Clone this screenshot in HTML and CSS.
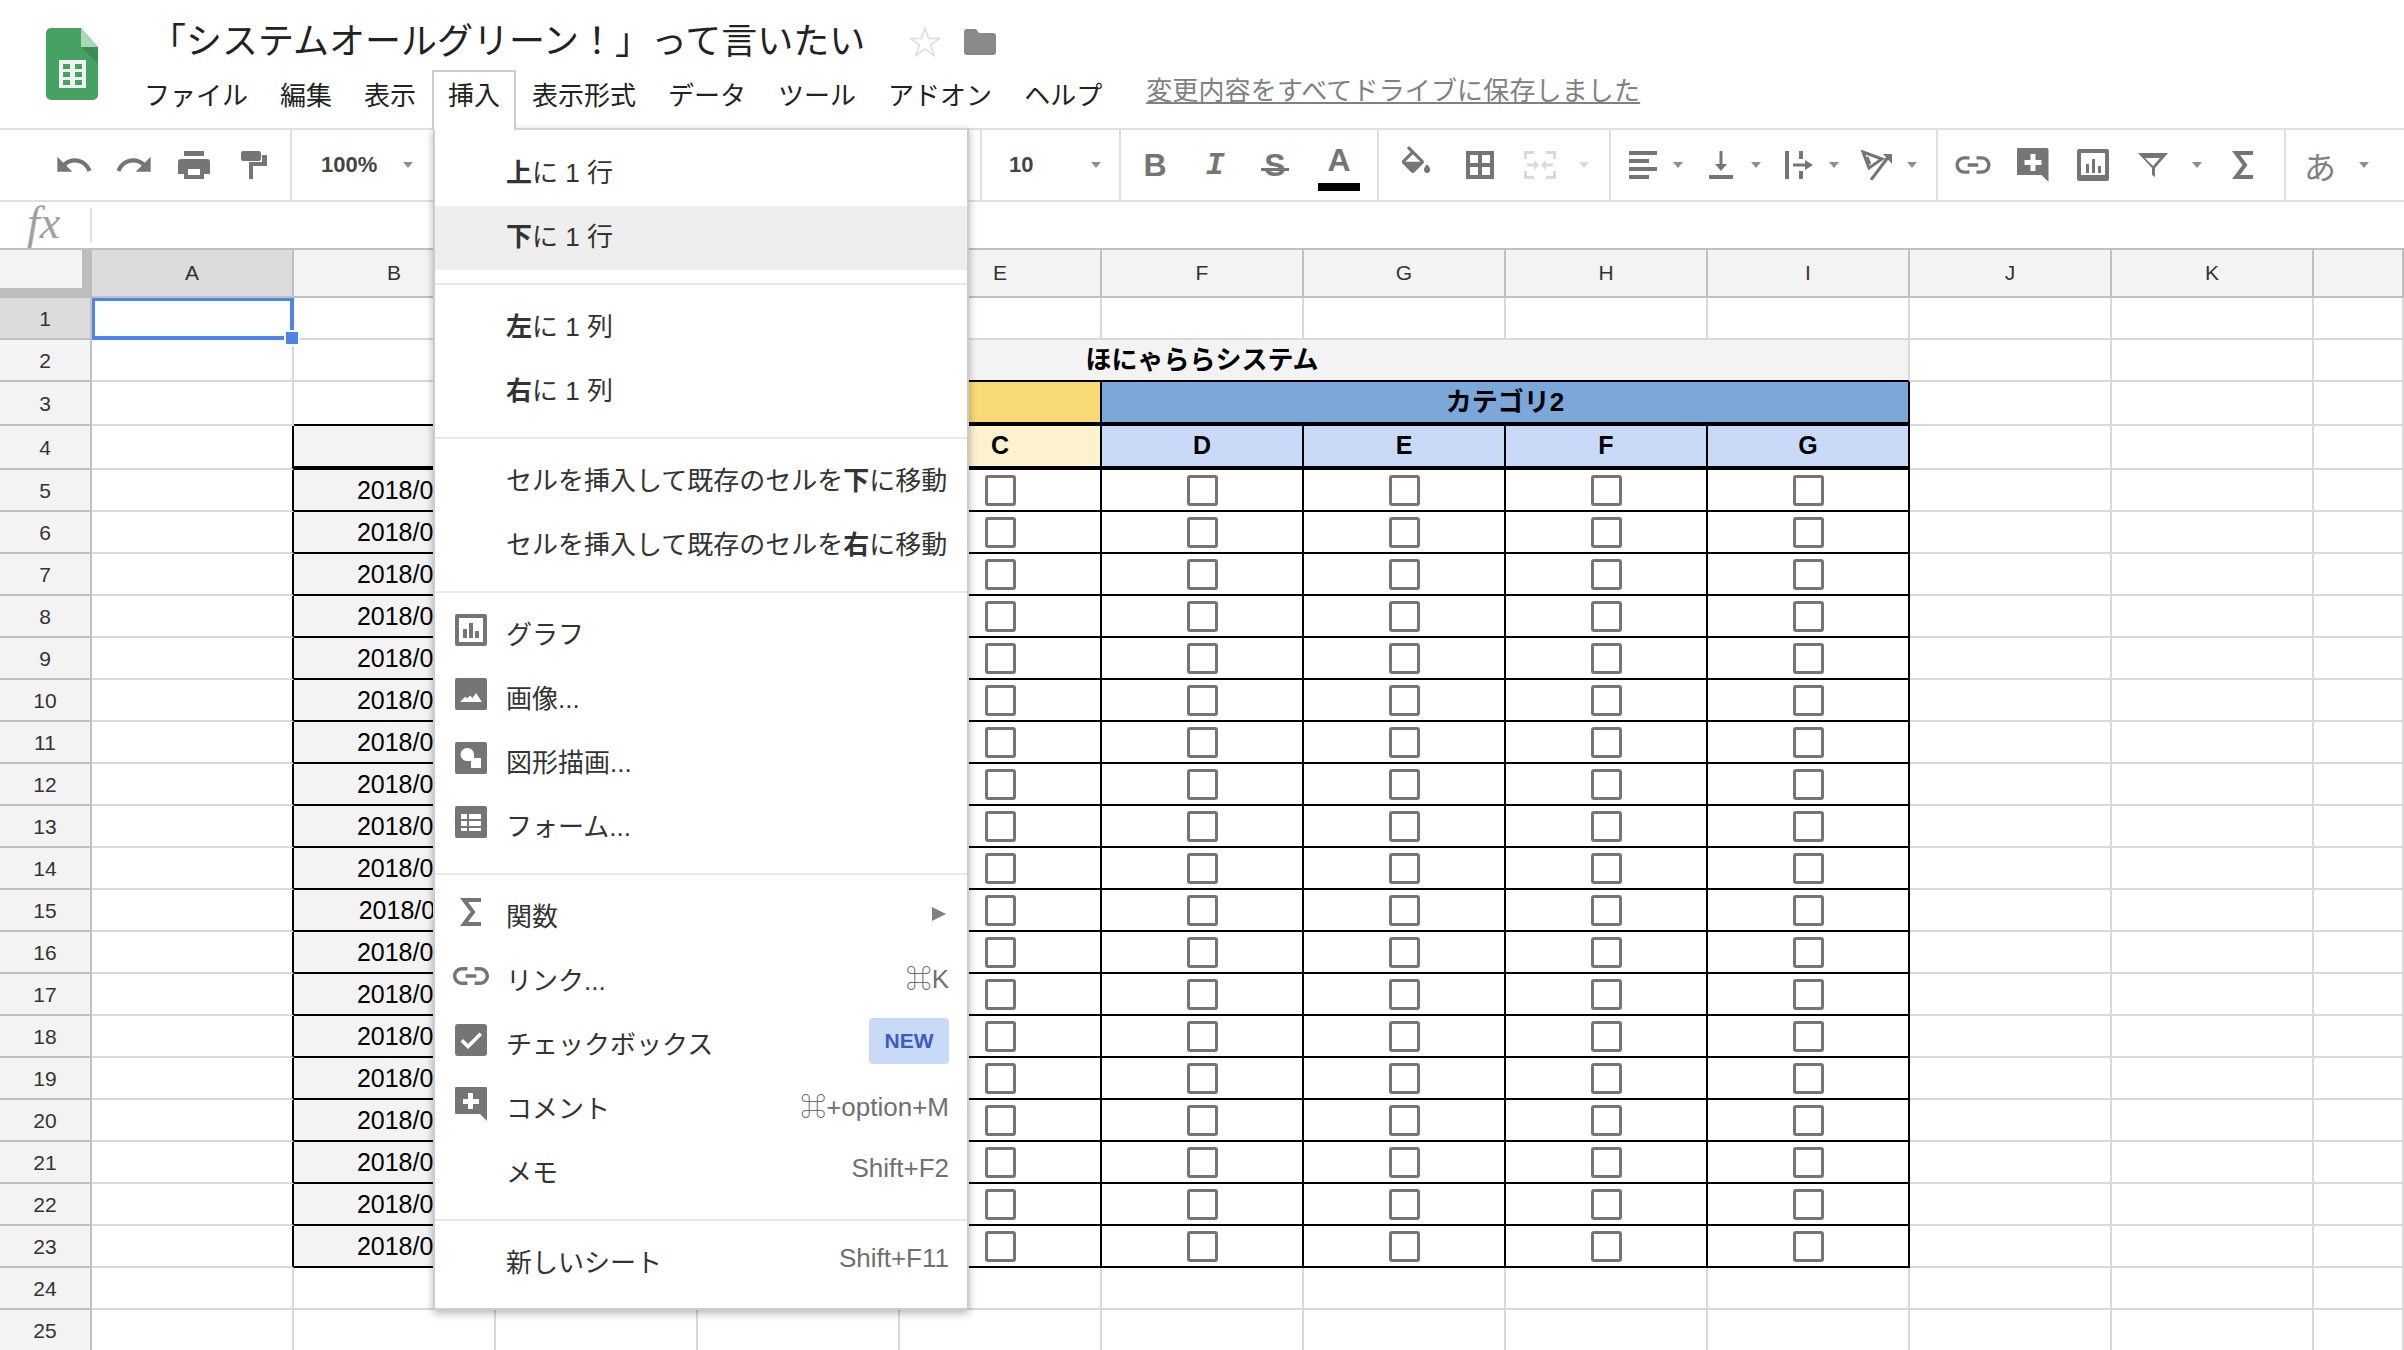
FILE: index.html
```html
<!DOCTYPE html>
<html lang="ja">
<head>
  <meta charset="UTF-8" />
  <title>「システムオールグリーン！」って言いたい - Google スプレッドシート</title>
  <link rel="stylesheet" href="styles.css">
</head>
<body>
<div class="app">

  <header class="doc-header">
    <svg class="logo" width="52" height="72" viewBox="0 0 52 72">
      <path d="M5 0h30l17 19v48a5 5 0 0 1-5 5H5a5 5 0 0 1-5-5V5a5 5 0 0 1 5-5z" fill="#46a263"/>
      <path d="M35 19l17 17V19z" fill="#3a8d55"/>
      <path d="M35 0l17 19H35z" fill="#a9d8b6"/>
      <path d="M13 32h27v28H13z" fill="#f1f1f1"/>
      <path d="M17 36h7v5h-7zM29 36h7v5h-7zM17 44h7v5h-7zM29 44h7v5h-7zM17 52h7v5h-7zM29 52h7v5h-7z" fill="#46a263"/>
    </svg>
    <div class="doc-main">
      <div class="title-row">
        <span class="doc-title">「システムオールグリーン！」って言いたい</span>
        <svg class="star" width="32" height="32" viewBox="0 0 32 32">
          <path d="M16 2l3.6 10.4h11l-8.9 6.5 3.4 10.6L16 23l-9.1 6.5 3.4-10.6-8.9-6.5h11z" fill="#fff" stroke="#dcdcdc" stroke-width="1.5"/>
        </svg>
        <svg class="folder" width="32" height="26" viewBox="0 0 32 26">
          <path d="M3 0h9l3 4h14a3 3 0 0 1 3 3v16a3 3 0 0 1-3 3H3a3 3 0 0 1-3-3V3a3 3 0 0 1 3-3z" fill="#8a8a8a"/>
        </svg>
      </div>
      <nav class="menu-bar">
        <span class="menu-item">ファイル</span>
        <span class="menu-item">編集</span>
        <span class="menu-item">表示</span>
        <span class="menu-item active">挿入</span>
        <span class="menu-item">表示形式</span>
        <span class="menu-item">データ</span>
        <span class="menu-item">ツール</span>
        <span class="menu-item">アドオン</span>
        <span class="menu-item">ヘルプ</span>
        <span class="save-status">変更内容をすべてドライブに保存しました</span>
      </nav>
    </div>
  </header>

  <section class="toolbar">
    <div class="tool-group group-history">
      <span class="tool"><svg width="40" height="40" viewBox="0 0 24 24"><path d="M12.5 8c-2.65 0-5.05.99-6.9 2.6L2 7v9h9l-3.62-3.62c1.39-1.16 3.16-1.88 5.12-1.88 3.54 0 6.55 2.31 7.6 5.5l2.37-.78C21.08 11.03 17.15 8 12.5 8z"/></svg></span>
      <span class="tool"><svg width="40" height="40" viewBox="0 0 24 24"><path d="M18.4 10.6C16.55 8.99 14.15 8 11.5 8c-4.65 0-8.58 3.03-9.96 7.22L3.9 16c1.05-3.19 4.05-5.5 7.6-5.5 1.95 0 3.73.72 5.12 1.88L13 16h9V7l-3.6 3.6z"/></svg></span>
      <span class="tool"><svg width="32" height="28" viewBox="0 0 32 28"><path fill-rule="evenodd" d="M6 0h20v5H6zM3 8h26a3 3 0 0 1 3 3v12h-6v5H6v-5H0V11a3 3 0 0 1 3-3zM10 18v6h12v-6z"/></svg></span>
      <span class="tool"><svg width="26" height="28" viewBox="0 0 26 28"><path d="M2 0h16a2 2 0 0 1 2 2v6a2 2 0 0 1-2 2H2a2 2 0 0 1-2-2V2a2 2 0 0 1 2-2zM21 4h5v11H12v13H8V11h13z"/></svg></span>
    </div>
    <div class="tool-group group-zoom">
      <span class="tool-value">100%</span>
      <i class="caret"></i>
    </div>
    <div class="tool-group group-font"></div>
    <div class="tool-group group-size">
      <span class="tool-value">10</span>
      <i class="caret"></i>
    </div>
    <div class="tool-group group-text">
      <span class="tool glyph glyph-b">B</span>
      <span class="tool glyph glyph-i">I</span>
      <span class="tool glyph glyph-s">S</span>
      <span class="tool glyph glyph-a">A</span>
    </div>
    <div class="tool-group group-cell">
      <span class="tool"><svg width="38" height="38" viewBox="0 0 24 24"><path d="M16.56 8.94L7.62 0 6.21 1.41l2.38 2.38-5.15 5.15c-.59.59-.59 1.54 0 2.12l5.5 5.5c.29.29.68.44 1.06.44s.77-.15 1.06-.44l5.5-5.5c.59-.58.59-1.53 0-2.12zM5.21 10L10 5.21 14.79 10H5.21zM19 11.5s-2 2.17-2 3.5c0 1.1.9 2 2 2s2-.9 2-2c0-1.33-2-3.5-2-3.5z"/></svg></span>
      <span class="tool tool-gap"><svg width="28" height="28" viewBox="0 0 28 28"><path fill-rule="evenodd" d="M0 0h28v28H0zM4 4v8h8V4zM16 4v8h8V4zM4 16v8h8v-8zM16 16v8h8v-8z"/></svg></span>
      <span class="tool tool-off"><svg width="32" height="28" viewBox="0 0 32 28"><path d="M0 0h10v3H3v5H0zM22 0h10v8h-3V3h-7zM0 20h3v5h7v3H0zM29 20h3v8H22v-3h7zM3 12.5h7V9l5 5-5 5v-3.5H3zM29 12.5h-7V9l-5 5 5 5v-3.5h7z"/></svg></span>
      <i class="caret caret-off"></i>
    </div>
    <div class="tool-group group-align">
      <span class="split">
        <span class="split-icon"><svg width="28" height="28" viewBox="0 0 28 28"><path d="M0 0h28v4H0zM0 8h20v4H0zM0 16h28v4H0zM0 24h20v4H0z"/></svg></span>
        <i class="caret"></i>
      </span>
      <span class="split">
        <span class="split-icon"><svg width="24" height="28" viewBox="0 0 24 28"><path d="M10.500 0h3v13H18l-6 7-6-7h4.500zM0 24h24v4H0z"/></svg></span>
        <i class="caret"></i>
      </span>
      <span class="split">
        <span class="split-icon"><svg width="28" height="28" viewBox="0 0 28 28"><path d="M0 0h4v28H0zM14 0h4v8h-4zM14 20h4v8h-4zM8 12.500h12V9l8 5-8 5v-3.500H8z"/></svg></span>
        <i class="caret"></i>
      </span>
      <span class="split">
        <span class="split-icon"><svg width="32" height="30" viewBox="0 0 32 30"><path d="M2 2l19 7-13 9zM6 7l3 7M10 30L28 6" fill="none" stroke="#757575" stroke-width="3"/><path d="M22 4h9v10z"/></svg></span>
        <i class="caret"></i>
      </span>
    </div>
    <div class="tool-group group-insert">
      <span class="tool"><svg width="42" height="42" viewBox="0 0 24 24"><path d="M3.900 12c0-1.710 1.390-3.100 3.100-3.100h3V7H7c-2.760 0-5 2.240-5 5s2.240 5 5 5h3v-1.900H7c-1.710 0-3.100-1.390-3.100-3.100zM9 13h6v-2H9v2zm8-6h-3v1.900h3c1.710 0 3.100 1.390 3.100 3.100s-1.390 3.100-3.100 3.100h-3V17h3c2.760 0 5-2.240 5-5s-2.240-5-5-5z"/></svg></span>
      <span class="tool"><svg width="32" height="34" viewBox="0 0 32 34"><path fill-rule="evenodd" d="M2 0h28a2 2 0 0 1 2 2v32l-7-7H2a2 2 0 0 1-2-2V2a2 2 0 0 1 2-2zM14 6v6H8v5h6v6h5v-6h6v-5h-6V6z" transform="translate(-0.500 0)"/></svg></span>
      <span class="tool"><svg width="32" height="32" viewBox="0 0 32 32"><path fill-rule="evenodd" d="M2 0h28a2 2 0 0 1 2 2v28a2 2 0 0 1-2 2H2a2 2 0 0 1-2-2V2a2 2 0 0 1 2-2zM4 4v22h24V4zM9 15h3v9H9zM15 10h3v14h-3zM21 17h3v7h-3z"/></svg></span>
      <span class="tool"><svg width="30" height="24" viewBox="0 0 30 24"><path fill-rule="evenodd" d="M0 0h30L17 15v9l-3-2v-7zM7 5l8 8 7-8z"/></svg></span>
      <i class="caret caret-filter"></i>
      <span class="tool"><svg width="22" height="28" viewBox="0 0 22 28"><path d="M21 2H4l9 12-9 12h17" fill="none" stroke="#757575" stroke-width="4"/></svg></span>
    </div>
    <div class="tool-group group-input">
      <span class="tool glyph-kana">あ</span>
      <i class="caret"></i>
    </div>
  </section>

  <section class="formula-bar">
    <span class="fx">fx</span>
    <span class="formula-input"></span>
  </section>

  <section class="sheet" id="sheet">
    <!-- セルはスクリプトで生成 -->
  </section>

  <div class="dropdown">
    <div class="drop-item"><span class="drop-icon"></span><span class="drop-label"><b>上</b>に 1 行</span></div>
    <div class="drop-item hover"><span class="drop-icon"></span><span class="drop-label"><b>下</b>に 1 行</span></div>
    <div class="drop-sep"></div>
    <div class="drop-item"><span class="drop-icon"></span><span class="drop-label"><b>左</b>に 1 列</span></div>
    <div class="drop-item"><span class="drop-icon"></span><span class="drop-label"><b>右</b>に 1 列</span></div>
    <div class="drop-sep"></div>
    <div class="drop-item"><span class="drop-icon"></span><span class="drop-label">セルを挿入して既存のセルを<b>下</b>に移動</span></div>
    <div class="drop-item"><span class="drop-icon"></span><span class="drop-label">セルを挿入して既存のセルを<b>右</b>に移動</span></div>
    <div class="drop-sep"></div>
    <div class="drop-item">
      <span class="drop-icon"><svg width="32" height="32" viewBox="0 0 32 32"><path fill-rule="evenodd" d="M2 0h28a2 2 0 0 1 2 2v28a2 2 0 0 1-2 2H2a2 2 0 0 1-2-2V2a2 2 0 0 1 2-2zM4 4v24h24V4zM8 15h4v9H8zM14 9h4v15h-4zM20 17h4v7h-4z"/></svg></span>
      <span class="drop-label">グラフ</span>
    </div>
    <div class="drop-item">
      <span class="drop-icon"><svg width="32" height="32" viewBox="0 0 32 32"><path fill-rule="evenodd" d="M2 0h28a2 2 0 0 1 2 2v28a2 2 0 0 1-2 2H2a2 2 0 0 1-2-2V2a2 2 0 0 1 2-2zM5 24h22l-6-9-3.500 5-2.500-2.500-3 3-1.500-2z"/></svg></span>
      <span class="drop-label">画像...</span>
    </div>
    <div class="drop-item">
      <span class="drop-icon"><svg width="32" height="32" viewBox="0 0 32 32"><path fill-rule="evenodd" d="M2 0h28a2 2 0 0 1 2 2v28a2 2 0 0 1-2 2H2a2 2 0 0 1-2-2V2a2 2 0 0 1 2-2zM12 6a6.500 6.500 0 0 0 0 13h4v7h10V16h-7v-3.500A6.500 6.500 0 0 0 12 6z"/></svg></span>
      <span class="drop-label">図形描画...</span>
    </div>
    <div class="drop-item">
      <span class="drop-icon"><svg width="32" height="32" viewBox="0 0 32 32"><path fill-rule="evenodd" d="M2 0h28a2 2 0 0 1 2 2v28a2 2 0 0 1-2 2H2a2 2 0 0 1-2-2V2a2 2 0 0 1 2-2zM6 8v5h6V8zM14 8v5h12V8zM6 15v5h6v-5zM14 15v5h12v-5zM6 22v3h6v-3zM14 22v3h12v-3z"/></svg></span>
      <span class="drop-label">フォーム...</span>
    </div>
    <div class="drop-sep"></div>
    <div class="drop-item">
      <span class="drop-icon"><svg width="22" height="28" viewBox="0 0 22 28"><path d="M21 2H4l9 12-9 12h17" fill="none" stroke="#757575" stroke-width="4"/></svg></span>
      <span class="drop-label">関数</span>
      <i class="submenu-arrow"></i>
    </div>
    <div class="drop-item">
      <span class="drop-icon"><svg width="36" height="18" viewBox="2 7 20 10"><path d="M3.900 12c0-1.710 1.390-3.100 3.100-3.100h3V7H7c-2.760 0-5 2.240-5 5s2.240 5 5 5h3v-1.900H7c-1.710 0-3.100-1.390-3.100-3.100zM9 13h6v-2H9v2zm8-6h-3v1.900h3c1.710 0 3.100 1.390 3.100 3.100s-1.390 3.100-3.100 3.100h-3V17h3c2.760 0 5-2.240 5-5s-2.240-5-5-5z"/></svg></span>
      <span class="drop-label">リンク...</span>
      <span class="shortcut">⌘K</span>
    </div>
    <div class="drop-item">
      <span class="drop-icon"><svg width="32" height="32" viewBox="0 0 32 32"><path fill-rule="evenodd" d="M3 0h26a3 3 0 0 1 3 3v26a3 3 0 0 1-3 3H3a3 3 0 0 1-3-3V3a3 3 0 0 1 3-3zM13 20l-5-5-2.500 2.500L13 25 27 11l-2.500-2.500z"/></svg></span>
      <span class="drop-label">チェックボックス</span>
      <span class="badge-new">NEW</span>
    </div>
    <div class="drop-item">
      <span class="drop-icon"><svg width="32" height="34" viewBox="0 0 32 34"><path fill-rule="evenodd" d="M1 0h30a1 1 0 0 1 1 1v33l-7-7H1a1 1 0 0 1-1-1V1a1 1 0 0 1 1-1zM13 6v6H8v5h5v5h5v-5h6v-5h-6V6z"/></svg></span>
      <span class="drop-label">コメント</span>
      <span class="shortcut">⌘+option+M</span>
    </div>
    <div class="drop-item">
      <span class="drop-icon"></span>
      <span class="drop-label">メモ</span>
      <span class="shortcut">Shift+F2</span>
    </div>
    <div class="drop-sep"></div>
    <div class="drop-item">
      <span class="drop-icon"></span>
      <span class="drop-label">新しいシート</span>
      <span class="shortcut">Shift+F11</span>
    </div>
  </div>

</div>

<script>
  const sheet = document.getElementById('sheet');
  const letters = ['A', 'B', 'C', 'D', 'E', 'F', 'G', 'H', 'I', 'J', 'K', ''];
  const subHeads = ['A', 'B', 'C', 'D', 'E', 'F', 'G'];

  function addCell(cls, content) {
    const el = document.createElement('div');
    el.className = 'cell ' + cls;
    if (content) el.innerHTML = content;
    sheet.appendChild(el);
  }

  function dateText(row) {
    const day = String(row - 4).padStart(2, '0');
    return '2018/06/' + day;
  }

  // 列ヘッダー
  addCell('corner');
  letters.forEach((l, i) => addCell('col-head' + (i === 0 ? ' on' : ''), l));

  for (let r = 1; r <= 25; r++) {
    addCell('row-head' + (r === 1 ? ' on' : ''), r);

    if (r === 2) {
      addCell('');
      addCell('');
      addCell('sys-title', 'ほにゃららシステム');
      for (let c = 0; c < 3; c++) addCell('');
    } else if (r === 3) {
      addCell('');
      addCell('under');
      addCell('cat cat-one', 'カテゴリ1');
      addCell('cat cat-two', 'カテゴリ2');
      for (let c = 0; c < 3; c++) addCell('');
    } else if (r === 4) {
      addCell('left-of');
      addCell('tb thick gray');
      subHeads.forEach((h, i) => addCell('tb thick head ' + (i < 3 ? 'head-one' : 'head-two'), h));
      for (let c = 0; c < 3; c++) addCell('');
    } else if (r >= 5 && r <= 23) {
      addCell('left-of');
      addCell('tb gray date', dateText(r));
      for (let c = 0; c < 7; c++) addCell('tb box', '<span class="check"></span>');
      for (let c = 0; c < 3; c++) addCell('');
    } else {
      for (let c = 0; c < 12; c++) addCell('');
    }
  }

  // A1 の選択枠
  const sel = document.createElement('div');
  sel.className = 'selection';
  sel.innerHTML = '<i class="handle"></i>';
  sheet.appendChild(sel);
</script>
</body>
</html>
```

FILE: styles.css
```css
* { box-sizing: border-box; }

html, body {
  margin: 0;
  height: 100%;
  overflow: hidden;
}

body {
  font-family: "Liberation Sans", "Noto Sans CJK JP", sans-serif;
  color: #333;
  background: #fff;
}

.app {
  position: relative;
  height: 1350px;
  overflow: hidden;
}

/* ヘッダー */
.doc-header {
  display: flex;
  height: 130px;
  padding: 28px 0 0 46px;
  border-bottom: 2px solid #e0e0e0;
}

.logo { flex: none; }

.doc-main {
  margin: -28px 0 0 30px;
}

.title-row {
  display: flex;
  align-items: center;
  height: 70px;
  padding: 14px 0 0 22px;
}

.doc-title {
  font-size: 36px;
  line-height: 44px;
  color: #222;
}

.star { margin-left: 44px; }
.folder { margin-left: 23px; }

.menu-bar {
  display: flex;
  height: 60px;
  font-size: 26px;
  line-height: 36px;
}

.menu-item {
  position: relative;
  padding: 6px 14px 0;
  border: 2px solid transparent;
  border-bottom: 0;
  color: #222;
}

.menu-item.active {
  border-color: #ccc;
  background: #fff;
  z-index: 5;
}

.save-status {
  height: 38px;
  margin-left: 28px;
  padding-top: 3px;
  color: #808080;
  letter-spacing: 0.15px;
  text-decoration: underline;
}

/* ツールバー */
.toolbar {
  display: flex;
  height: 72px;
  border-bottom: 2px solid #e0e0e0;
}

.tool-group {
  display: flex;
  align-items: center;
  border-right: 2px solid #e0e0e0;
}

.tool-group svg { fill: #757575; display: block; }

.group-history { width: 292px; padding-left: 44px; }
.group-zoom { width: 200px; padding-left: 29px; }
.group-font { width: 490px; }
.group-size { width: 139px; padding-left: 27px; }
.group-text { width: 258px; padding-left: 4px; }
.group-cell { width: 232px; padding-left: 7px; }
.group-align { width: 327px; padding-left: 10px; }
.group-insert { width: 348px; padding-left: 5px; }
.group-input { flex: 1; border-right: 0; padding-left: 4px; }

.group-zoom .caret { margin-left: 26px; }
.group-size .caret { margin-left: 58px; }

.tool {
  display: flex;
  align-items: center;
  justify-content: center;
  position: relative;
  width: 60px;
  height: 60px;
  flex: none;
}

.tool-gap { margin-left: 4px; }
.tool-off svg { fill: #d9d9d9; }

.tool-value {
  font-size: 22px;
  font-weight: 700;
  color: #444;
}

.caret {
  flex: none;
  display: block;
  width: 0;
  height: 0;
  border-left: 5px solid transparent;
  border-right: 5px solid transparent;
  border-top: 6px solid #8f8f8f;
}

.caret-off { border-top-color: #dcdcdc; margin-left: 9px; }
.caret-filter { margin: 0 11px 0 9px; }

.glyph {
  color: #757575;
  font-size: 32px;
  font-weight: 700;
}

.glyph-i {
  font-family: "Liberation Mono", monospace;
  font-style: italic;
}

.glyph-s::after {
  content: "";
  position: absolute;
  left: 16px;
  top: 33px;
  width: 28px;
  height: 3px;
  background: #757575;
}

.glyph-a { margin-left: 4px; padding-bottom: 9px; }

.glyph-a::after {
  content: "";
  position: absolute;
  left: 9px;
  top: 48px;
  width: 42px;
  height: 8px;
  background: #000;
}

.glyph-kana {
  color: #808080;
  font-size: 32px;
  font-family: "Noto Sans CJK JP", sans-serif;
}

.group-input .caret { margin-left: 9px; }

.split {
  display: flex;
  align-items: center;
  width: 78px;
  flex: none;
}

.split-icon {
  display: flex;
  justify-content: center;
  width: 44px;
}

.split .caret { margin-left: 8px; }

/* 数式バー */
.formula-bar {
  display: flex;
  align-items: center;
  height: 46px;
}

.fx {
  width: 90px;
  margin-top: -4px;
  padding-left: 27px;
  font-family: "Liberation Serif", serif;
  font-style: italic;
  font-size: 46px;
  line-height: 38px;
  color: #a0a0a0;
}

.formula-input {
  height: 34px;
  border-left: 2px solid #e0e0e0;
}

/* シート */
.sheet {
  position: relative;
  display: grid;
  grid-template-columns: 92px repeat(11, 202px) 90px;
  grid-template-rows: 48px 42px 42px 44px 44px repeat(21, 42px);
  border-top: 2px solid #c0c0c0;
}

.cell {
  display: flex;
  align-items: center;
  justify-content: center;
  min-width: 0;
  border-right: 2px solid #d9d9d9;
  border-bottom: 2px solid #d9d9d9;
  font-size: 21px;
}

.corner {
  background: #f3f3f3;
  border-right: 10px solid #bdbdbd;
  border-bottom: 10px solid #bdbdbd;
}

.col-head, .row-head {
  background: #f3f3f3;
  border-color: #c0c0c0;
  color: #333;
}

.row-head { padding-top: 1px; }

.col-head.on, .row-head.on { background: #dcdcdc; }

.sys-title {
  grid-column: span 7;
  padding-bottom: 5px;
  background: #f3f3f3;
  border-bottom-color: #000;
  font-size: 26px;
  font-weight: 700;
  color: #000;
}

.cat {
  padding-bottom: 5px;
  font-size: 26px;
  font-weight: 700;
  color: #000;
  border-right-color: #000;
  border-bottom: 4px solid #000;
}

.cat-one { grid-column: span 3; background: #f9d976; }
.cat-two { grid-column: span 4; background: #7ba7d9; }

.under { border-bottom-color: #000; }
.left-of { border-right-color: #000; }

.tb {
  border-right-color: #000;
  border-bottom-color: #000;
}

.thick { border-bottom-width: 4px; }
.gray { background: #f3f3f3; }

.head {
  padding-bottom: 2px;
  font-size: 25px;
  font-weight: 700;
  color: #000;
}

.head-one { background: #fcf2cd; }
.head-two { background: #c9daf8; }

.date {
  justify-content: flex-end;
  padding-right: 12px;
  font-size: 25px;
  color: #000;
}

.check {
  width: 31px;
  height: 31px;
  border: 3px solid #757575;
  border-radius: 3px;
  background: #fff;
}

.selection {
  position: absolute;
  left: 92px;
  top: 48px;
  width: 202px;
  height: 42px;
  border: solid #4d83ec;
  border-width: 3px 4px 4px 3px;
  pointer-events: none;
}

.handle {
  position: absolute;
  right: -8px;
  bottom: -8px;
  width: 12px;
  height: 12px;
  background: #4d83ec;
  outline: 2px solid #fff;
}

/* 挿入メニュー */
.dropdown {
  position: absolute;
  left: 433px;
  top: 128px;
  width: 536px;
  padding: 12px 0;
  background: #fff;
  border: 2px solid #ccc;
  border-top-color: #d4d4d4;
  box-shadow: 0 3px 8px rgba(0, 0, 0, 0.3);
  font-size: 26px;
  color: #333;
  z-index: 4;
}

.drop-item {
  display: flex;
  align-items: center;
  height: 64px;
  padding: 0 18px 8px 18px;
}

.drop-item.hover { background: #eee; }

.drop-icon {
  flex: none;
  display: flex;
  align-items: center;
  justify-content: center;
  width: 36px;
  margin: 0 17px 4px 0;
}

.drop-icon svg { fill: #757575; display: block; }

.drop-label { flex: 1; white-space: nowrap; }

.drop-sep {
  height: 2px;
  margin: 13px 0 11px;
  background: #e8e8e8;
}

.shortcut {
  margin-bottom: 4px;
  color: #707070;
}

.submenu-arrow {
  width: 0;
  height: 0;
  margin-right: 3px;
  border-top: 7px solid transparent;
  border-bottom: 7px solid transparent;
  border-left: 14px solid #808080;
}

.badge-new {
  display: flex;
  align-items: center;
  justify-content: center;
  width: 80px;
  height: 46px;
  margin-bottom: 2px;
  border-radius: 4px;
  background: #c9daf8;
  color: #3b5cc4;
  font-size: 21px;
  font-weight: 700;
}
```
